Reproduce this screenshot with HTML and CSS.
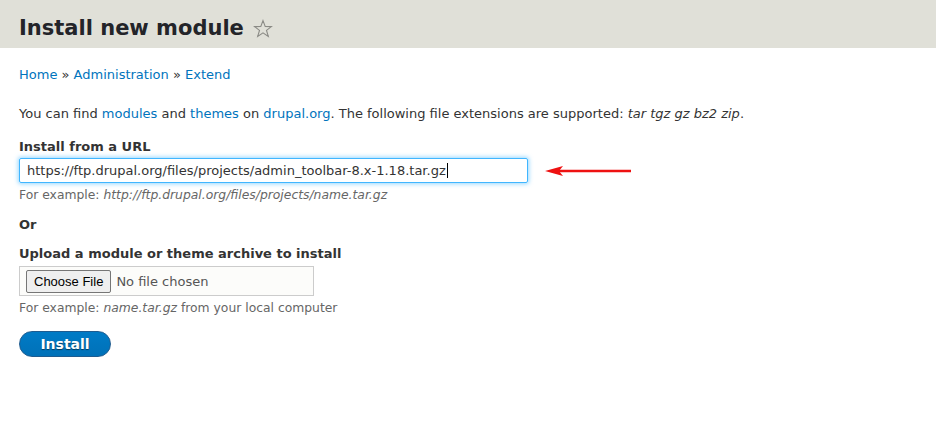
FILE: index.html
```html
<!DOCTYPE html>
<html>
<head>
<meta charset="utf-8">
<link rel="stylesheet" href="styles.css">
</head>
<body>
<header class="page-header">
  <h1 class="page-title">Install new module <span class="star"><svg width="20" height="20" viewBox="0 0 20 20"><path d="M10 1.6 L12.2 7.4 L18.4 7.6 L13.5 11.4 L15.3 17.4 L10 13.9 L4.7 17.4 L6.5 11.4 L1.6 7.6 L7.8 7.4 Z" fill="none" stroke="#8a8a85" stroke-width="1.1" stroke-linejoin="miter"/></svg></span></h1>
</header>
<main class="content">
  <nav class="breadcrumb"><a href="#">Home</a> » <a href="#">Administration</a> » <a href="#">Extend</a></nav>
  <p class="intro">You can find <a href="#">modules</a> and <a href="#">themes</a> on <a href="#">drupal.org</a>. The following file extensions are supported: <em>tar tgz gz bz2 zip</em>.</p>
  <div class="form-item url-item">
    <label class="label">Install from a URL</label>
    <div class="url-row">
      <div class="text-input">https://ftp.drupal.org/files/projects/admin_toolbar-8.x-1.18.tar.gz<span class="caret"></span></div>
      <svg class="arrow" width="88" height="12" viewBox="0 0 88 12"><path d="M86 6 L14 6" stroke="#ee1111" stroke-width="2.4"/><path d="M0 6 L18 1 L14 6 L18 11 Z" fill="#ee1111"/></svg>
    </div>
    <div class="description">For example: <em>http://ftp.drupal.org/files/projects/name.tar.gz</em></div>
  </div>
  <div class="or">Or</div>
  <div class="form-item upload-item">
    <label class="label">Upload a module or theme archive to install</label>
    <div class="file-input"><span class="file-btn">Choose File</span><span class="file-name">No file chosen</span></div>
    <div class="description">For example: <em>name.tar.gz</em> from your local computer</div>
  </div>
  <div class="actions"><span class="button">Install</span></div>
</main>
</body>
</html>
```
FILE: styles.css
```css
html, body {
  margin: 0;
  padding: 0;
  background: #fff;
}
body {
  font-family: "DejaVu Sans", sans-serif;
  font-size: 13px;
  color: #333;
}
a { color: #0074bd; text-decoration: none; }
.page-header {
  background: #e0e0d8;
  height: 48px;
  padding: 0 19px;
  box-sizing: border-box;
}
.page-title {
  margin: 0;
  padding-top: 15px;
  font-size: 21px;
  line-height: 27px;
  font-weight: bold;
  color: #232429;
  display: flex;
  align-items: center;
}
.star { display: inline-flex; margin-left: 9px; }
.content { padding: 0 19px; }
.breadcrumb { margin-top: 18px; line-height: 17px; }
.intro { margin: 22px 0 0; line-height: 17px; }
.url-item { margin-top: 16px; }
.upload-item { margin-top: 12px; }
.label { display: block; font-weight: bold; line-height: 17px; color: #333; }
.url-row { display: flex; align-items: center; margin-top: 3px; }
.text-input {
  width: 509px;
  height: 25px;
  box-sizing: border-box;
  border: 1px solid #40b6ff;
  border-radius: 2px;
  box-shadow: 0 0 4px 1px rgba(64,182,255,0.55);
  padding: 0 7px;
  font-size: 13px;
  color: #333;
  white-space: nowrap;
  display: flex;
  align-items: center;
}
.caret { display: inline-block; width: 1px; height: 15px; background: #000; margin-left: 1px; }
.arrow { margin-left: 17px; }
.description { font-size: 12.35px; color: #666; line-height: 16px; margin-top: 4px; }
.or { font-weight: bold; margin-top: 13px; line-height: 17px; }
.file-input {
  margin-top: 4px;
  width: 295px;
  height: 30px;
  box-sizing: border-box;
  border: 1px solid #ccc;
  background: #fcfcfa;
  display: flex;
  align-items: center;
  padding-left: 6px;
}
.file-btn {
  font-family: "Liberation Sans", Arial, sans-serif;
  font-size: 13px;
  color: #000;
  background: #efefef;
  border: 1px solid #767676;
  border-radius: 2px;
  padding: 3px 7px;
  line-height: 15px;
}
.file-name { margin-left: 5px; color: #555; }
.actions { margin-top: 15px; }
.button {
  display: inline-block;
  width: 92px;
  height: 26px;
  box-sizing: border-box;
  border-radius: 20px;
  background: linear-gradient(#007bc6, #0071b8);
  border: 1px solid #1e5c90;
  color: #fff;
  font-weight: bold;
  font-size: 14px;
  line-height: 24px;
  text-align: center;
  text-shadow: 0 1px 1px rgba(0,0,0,0.5);
}
```
